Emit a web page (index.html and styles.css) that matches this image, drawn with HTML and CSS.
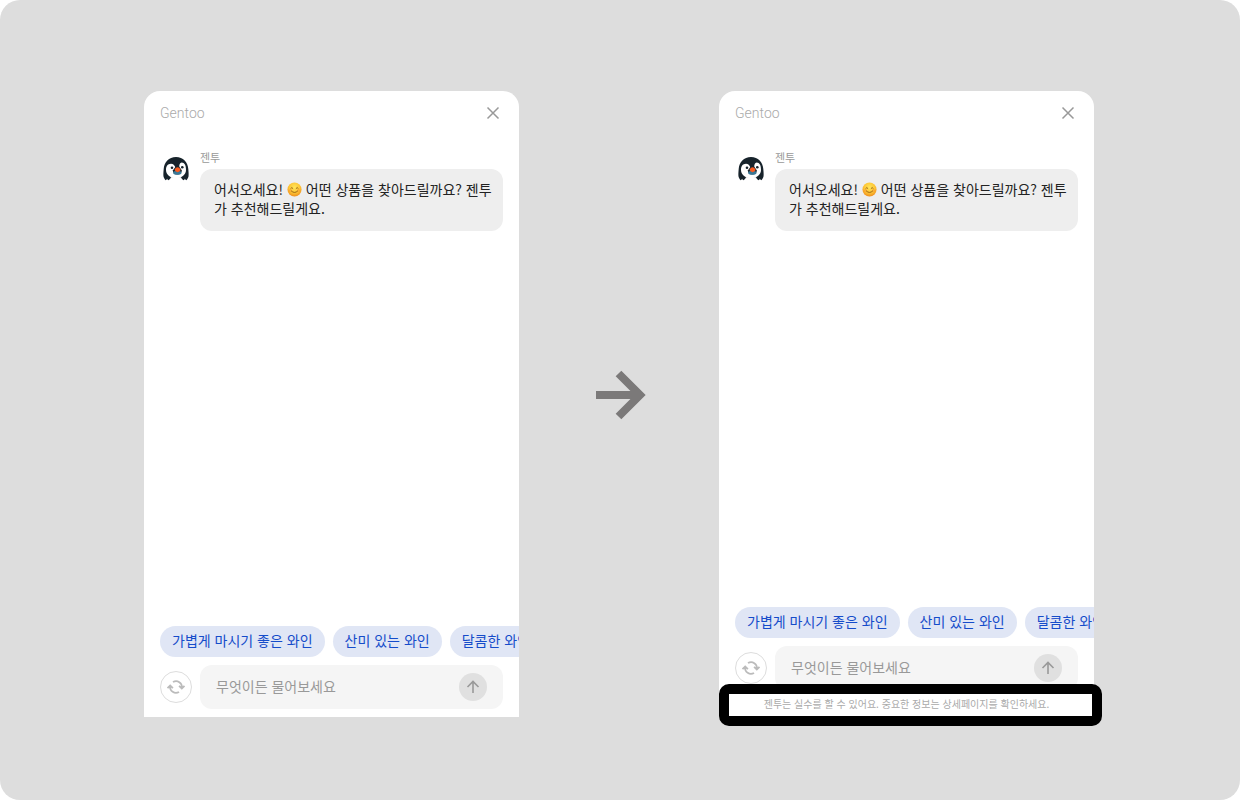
FILE: index.html
```html
<!DOCTYPE html>
<html lang="ko">
<head>
<meta charset="utf-8">
<meta name="viewport" content="width=device-width, initial-scale=1">
<title>Gentoo</title>
<link rel="stylesheet" href="styles.css">
</head>
<body>
<svg class="defs" aria-hidden="true">
  <defs>
    <radialGradient id="face" cx="50%" cy="35%" r="65%">
      <stop offset="0" stop-color="#ffe65a"/>
      <stop offset="0.6" stop-color="#fdc535"/>
      <stop offset="1" stop-color="#ee8d1d"/>
    </radialGradient>
    <symbol id="penguin" viewBox="0 0 26 26">
      <path d="M13 1C5.800 1 1.200 6.200.700 13C.400 16 .200 18.500.500 20.500C1 22.500 1.900 23.600 2.800 24.200Q3.800 23.400 4.100 22.800Q4.700 24 5.300 24.300C6.500 23.700 7.500 22.500 8 21.200H18C18.500 22.500 19.500 23.700 20.700 24.300Q21.300 24 21.900 22.800Q22.200 23.400 23.200 24.200C24.100 23.600 25 22.500 25.500 20.500C25.800 18.500 25.600 16 25.300 13C24.800 6.200 20.200 1 13 1Z" fill="#17232b"/>
      <path d="M12.500 11.500C11.500 9 10.300 7.700 8 7.700C4.600 7.700 2.900 10.500 3 14C3.100 18.500 7 22.300 13 22.300S22.900 18.500 23 14C23.100 9.500 21.500 6.600 18.700 6.600C16.800 6.600 16.200 9 16.200 11.500Z" fill="#fff"/>
      <path d="M14.300 8.500L12 11.500L9.800 14.500C10 17 12 18.500 14.300 18.500S18.700 17 18.900 14.500L16.500 11Z" fill="#17232b"/>
      <ellipse cx="14.300" cy="16.800" rx="4.200" ry="2" fill="#3b7896"/>
      <path d="M14.600 11.300C16 11.600 17.400 12.700 17.600 13.900Q16.500 15.500 14.600 16.300Q12.500 15.500 11.600 13.900C11.800 12.700 13 11.600 14.600 11.300Z" fill="#fa5b20"/>
      <circle cx="9" cy="11.800" r="1.300" fill="#17232b"/>
      <circle cx="19.300" cy="11.300" r="1.300" fill="#17232b"/>
    </symbol>
    <symbol id="smile" viewBox="0 0 16 16">
      <circle cx="8" cy="8" r="7.500" fill="url(#face)"/>
      <ellipse cx="3.600" cy="9" rx="2" ry="1.400" fill="#f77b35" opacity=".3"/>
      <ellipse cx="12.400" cy="9" rx="2" ry="1.400" fill="#f77b35" opacity=".3"/>
      <path d="M4 6.800Q5.200 4.800 6.300 6.800M9.700 6.800Q10.800 4.800 12 6.800M4.700 9.700Q8 12.800 11.300 9.700" fill="none" stroke="#8a5310" stroke-width="0.900" stroke-linecap="round"/>
    </symbol>
    <symbol id="close" viewBox="0 0 14 14">
      <path d="M1.500 1.500L12.500 12.500M12.500 1.500L1.500 12.500" fill="none" stroke="#999" stroke-width="1.500"/>
    </symbol>
    <symbol id="refresh" viewBox="0 0 20 20">
      <path d="M7 5.100A5.800 5.800 0 0 1 15.800 11M13 14.900A5.800 5.800 0 0 1 4.200 9M1.500 11.200L4.200 8.500L6.900 11.200M13.100 8.800L15.800 11.500L18.500 8.800" fill="none" stroke="#bbb" stroke-width="1.800"/>
    </symbol>
    <symbol id="up" viewBox="0 0 14 14">
      <path d="M7 13V2M1.500 7L7 1.500L12.500 7" fill="none" stroke="#999" stroke-width="1.600"/>
    </symbol>
  </defs>
</svg>
<main class="stage">
  <section class="panel" aria-label="Gentoo">
    <header class="head">
      <span class="brand">Gentoo</span>
      <button class="icon-button" type="button" aria-label="닫기"><svg class="icon-close"><use href="#close"/></svg></button>
    </header>
    <div class="message">
      <svg class="avatar" aria-hidden="true"><use href="#penguin"/></svg>
      <div class="message-body">
        <span class="name">젠투</span>
        <p class="bubble">어서오세요! <svg class="emoji" role="img" aria-label="미소"><use href="#smile"/></svg> 어떤 상품을 찾아드릴까요? 젠투가 추천해드릴게요.</p>
      </div>
    </div>
    <div class="chips">
      <button class="chip" type="button">가볍게 마시기 좋은 와인</button>
      <button class="chip" type="button">산미 있는 와인</button>
      <button class="chip" type="button">달콤한 와인</button>
    </div>
    <form class="composer">
      <button class="reset" type="button" aria-label="새로고침"><svg class="icon-refresh"><use href="#refresh"/></svg></button>
      <div class="field">
        <input class="input" type="text" aria-label="메시지" placeholder="무엇이든 물어보세요">
        <button class="send" type="button" aria-label="보내기"><svg class="icon-up"><use href="#up"/></svg></button>
      </div>
    </form>
  </section>

  <div class="between">
    <svg class="arrow" viewBox="0 0 52 50" role="img" aria-label="변경 후">
      <path d="M1 25H45M23.500 3.500L45 25L23.500 46.500" fill="none" stroke="#7b7979" stroke-width="8"/>
    </svg>
  </div>

  <section class="panel" aria-label="Gentoo">
    <header class="head">
      <span class="brand">Gentoo</span>
      <button class="icon-button" type="button" aria-label="닫기"><svg class="icon-close"><use href="#close"/></svg></button>
    </header>
    <div class="message">
      <svg class="avatar" aria-hidden="true"><use href="#penguin"/></svg>
      <div class="message-body">
        <span class="name">젠투</span>
        <p class="bubble">어서오세요! <svg class="emoji" role="img" aria-label="미소"><use href="#smile"/></svg> 어떤 상품을 찾아드릴까요? 젠투가 추천해드릴게요.</p>
      </div>
    </div>
    <div class="chips">
      <button class="chip" type="button">가볍게 마시기 좋은 와인</button>
      <button class="chip" type="button">산미 있는 와인</button>
      <button class="chip" type="button">달콤한 와인</button>
    </div>
    <form class="composer">
      <button class="reset" type="button" aria-label="새로고침"><svg class="icon-refresh"><use href="#refresh"/></svg></button>
      <div class="field">
        <input class="input" type="text" aria-label="메시지" placeholder="무엇이든 물어보세요">
        <button class="send" type="button" aria-label="보내기"><svg class="icon-up"><use href="#up"/></svg></button>
      </div>
    </form>
    <p class="notice">젠투는 실수를 할 수 있어요. 중요한 정보는 상세페이지를 확인하세요.</p>
    <div class="highlight"></div>
  </section>
</main>
</body>
</html>
```
FILE: styles.css
```css
* {
  box-sizing: border-box;
}

body {
  margin: 0;
  background: #fff;
  color: #222;
  font-family: "Noto Sans CJK KR", sans-serif;
  font-size: 14px;
}

button,
input {
  padding: 0;
  border: 0;
  background: none;
  font: inherit;
}

.defs {
  position: absolute;
  width: 0;
  height: 0;
}

.stage {
  display: flex;
  justify-content: center;
  min-height: 100vh;
  padding: 91px 2px 83px 0;
  border-radius: 20px;
  background: #ddd;
}

.panel {
  position: relative;
  display: flex;
  flex: 0 1 375px;
  flex-direction: column;
  min-width: 0;
  padding-bottom: 8px;
  border-radius: 16px 16px 0 0;
  background: #fff;
}

.between {
  display: flex;
  flex: 0 1 200px;
  align-items: center;
  justify-content: center;
  padding: 0 0 18px 4px;
}

.arrow {
  width: 52px;
  height: 50px;
}

.head {
  display: flex;
  align-items: center;
  justify-content: space-between;
  height: 44px;
  padding: 0 16px;
}

.brand {
  color: #aaa;
  font-family: Roboto, sans-serif;
  font-size: 14px;
  font-weight: 300;
}

.icon-button {
  display: grid;
  place-items: center;
  width: 20px;
  height: 20px;
}

.icon-close,
.icon-up {
  width: 14px;
  height: 14px;
}

.message {
  display: flex;
  gap: 8px;
  padding: 14px 16px;
}

.avatar {
  flex: none;
  width: 32px;
  height: 26px;
  margin-top: 7px;
}

.message-body {
  flex: 1;
  min-width: 0;
}

.name {
  display: block;
  color: #999;
  font-size: 11px;
  line-height: 16px;
}

.bubble {
  margin: 4px 0 0;
  padding: 11px 6px 13px 14px;
  border-radius: 12px;
  background: #eee;
  line-height: 19px;
  word-break: break-all;
}

.emoji {
  width: 15px;
  height: 15px;
  vertical-align: -2px;
}

.chips {
  display: flex;
  gap: 8px;
  margin-top: auto;
  padding-left: 16px;
  overflow: hidden;
}

.chip {
  flex: none;
  height: 31px;
  padding: 0 12px 2px;
  border-radius: 16px;
  background: #e0e6f5;
  color: #154cca;
  line-height: 29px;
  white-space: nowrap;
}

.composer {
  display: flex;
  gap: 8px;
  align-items: center;
  padding: 8px 16px 0;
}

.reset {
  display: grid;
  flex: none;
  place-items: center;
  width: 32px;
  height: 32px;
  border: 1px solid #ddd;
  border-radius: 50%;
}

.icon-refresh {
  width: 20px;
  height: 20px;
}

.field {
  display: flex;
  flex: 1;
  align-items: center;
  min-width: 0;
  height: 44px;
  padding: 0 16px;
  border-radius: 12px;
  background: #f5f5f5;
}

.input {
  flex: 1;
  min-width: 0;
  height: 44px;
  padding-bottom: 2px;
  outline: 0;
}

.input::placeholder {
  color: #999;
  opacity: 1;
}

.send {
  display: grid;
  flex: none;
  place-items: center;
  width: 28px;
  height: 28px;
  border-radius: 50%;
  background: #e0e0e0;
}

.notice {
  margin: 6px 0 -2px;
  color: #aaa;
  font-size: 10px;
  line-height: 15px;
  text-align: center;
}

/* Frame drawn over the notice to call it out */
.highlight {
  position: absolute;
  right: -8px;
  bottom: -9px;
  left: 0;
  height: 42px;
  border: 10px solid #000;
  border-radius: 10px;
  pointer-events: none;
}
```
